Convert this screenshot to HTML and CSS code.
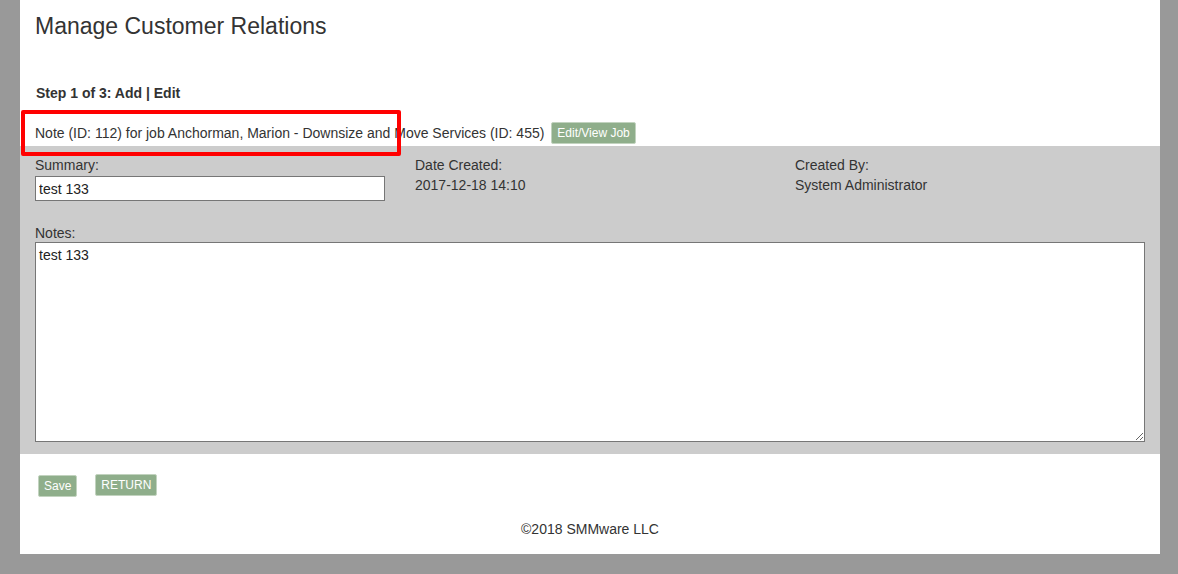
FILE: index.html
```html
<!DOCTYPE html>
<html lang="en">
<head>
  <meta charset="UTF-8">
  <title>Manage Customer Relations</title>
  <link rel="stylesheet" href="styles.css">
</head>
<body>
  <div class="page">
    <h1>Manage Customer Relations</h1>

    <div class="steps">Step 1 of 3: Add | Edit</div>

    <div class="note-title">
      Note (ID: 112) for job Anchorman, Marion - Downsize and Move Services (ID: 455)
      <button class="btn">Edit/View Job</button>
      <div class="highlight"></div>
    </div>

    <div class="panel">
      <div class="fields">
        <div class="field">
          <label>Summary:</label>
          <input type="text" value="test 133">
        </div>
        <div class="field">
          <label>Date Created:</label>
          <div class="value">2017-12-18 14:10</div>
        </div>
        <div class="field">
          <label>Created By:</label>
          <div class="value">System Administrator</div>
        </div>
      </div>
      <div class="notes">
        <label>Notes:</label>
        <textarea>test 133</textarea>
      </div>
    </div>

    <div class="actions">
      <button class="btn save">Save</button>
      <button class="btn">RETURN</button>
    </div>

    <div class="footer">&copy;2018 SMMware LLC</div>
  </div>
</body>
</html>
```

FILE: styles.css
```css
html, body {
  margin: 0;
  padding: 0;
}
body {
  background-color: #999;
  font-family: "Liberation Sans", Arial, sans-serif;
  color: #333;
  font-size: 14px;
}
.page {
  background-color: #fff;
  margin: 0 18px 0 20px;
  height: 554px;
}
h1 {
  margin: 0;
  padding: 13px 0 0 15px;
  font-size: 23px;
  font-weight: normal;
  line-height: 26px;
}
.steps {
  padding: 46px 0 0 16px;
  font-size: 14px;
  font-weight: bold;
  line-height: 16px;
}
.note-title {
  position: relative;
  padding: 24px 0 0 15px;
  height: 21px;
  line-height: 16px;
  font-size: 14px;
}
.highlight {
  position: absolute;
  left: 1px;
  top: 9px;
  width: 372px;
  height: 38px;
  border: 4px solid #f00;
  border-radius: 2px;
  z-index: 2;
}
.btn {
  background-color: #8fae8b;
  color: #fff;
  border: 1px solid #c2d3bf;
  border-radius: 2px;
  font-family: "Liberation Sans", Arial, sans-serif;
  font-size: 12px;
  padding: 2px 5px;
  line-height: 16px;
  cursor: pointer;
  vertical-align: top;
}
.note-title .btn {
  margin-left: 3px;
  margin-top: -3px;
  padding: 2px 5px;
}
.panel {
  background-color: #ccc;
  padding: 11px 15px 12px 15px;
  position: relative;
}
.fields {
  display: grid;
  grid-template-columns: 380px 380px 1fr;
}
label {
  display: block;
  line-height: 16px;
  font-size: 14px;
  color: #333;
}
.field .value {
  margin-top: 4px;
  line-height: 16px;
}
input[type="text"] {
  box-sizing: border-box;
  width: 350px;
  height: 25px;
  margin-top: 3px;
  border: 1px solid #767676;
  padding: 2px 3px;
  font-family: "Liberation Sans", Arial, sans-serif;
  font-size: 14px;
  color: #222;
}
.notes {
  margin-top: 24px;
}
textarea {
  box-sizing: border-box;
  display: block;
  width: 100%;
  height: 200px;
  margin-top: 1px;
  border: 1px solid #767676;
  padding: 4px 3px;
  font-family: "Liberation Sans", Arial, sans-serif;
  font-size: 14px;
  color: #222;
  resize: both;
}
.actions {
  display: flex;
  align-items: flex-start;
  gap: 18px;
  padding: 20px 0 0 18px;
}
.actions .save {
  margin-top: 1px;
}
.footer {
  text-align: center;
  margin-top: 24px;
  font-size: 14px;
  line-height: 16px;
}
```
